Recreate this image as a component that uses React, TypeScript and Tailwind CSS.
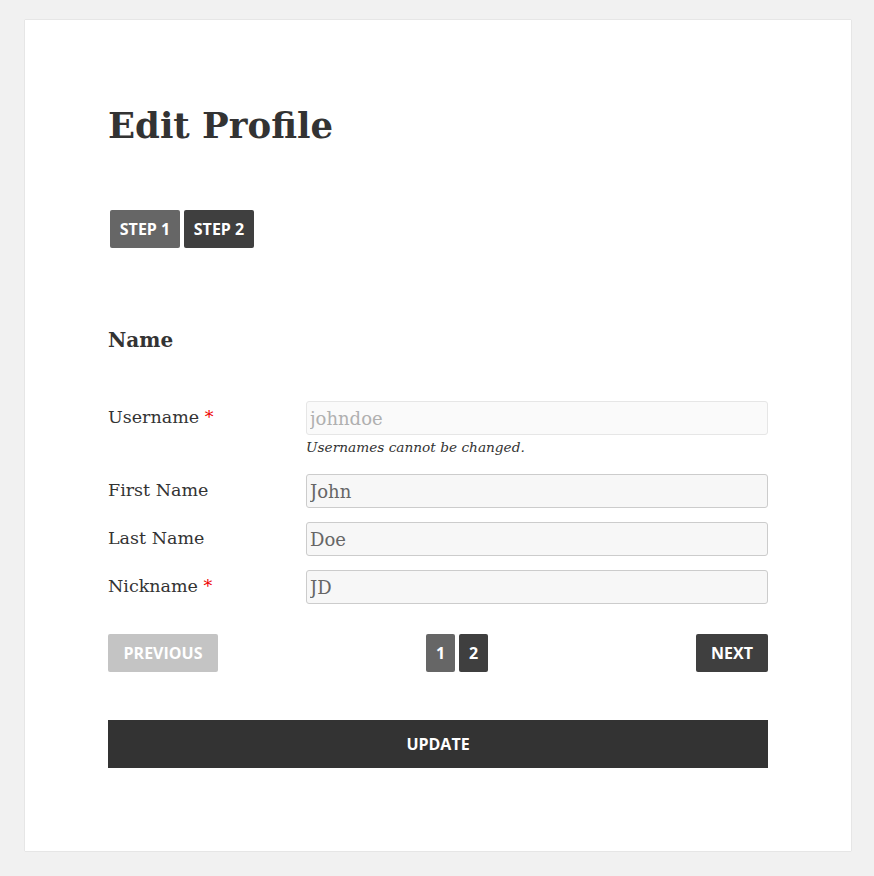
import React from 'react';

const serif = "font-['DejaVu_Serif','Liberation_Serif',serif]";
const sans = "font-['Open_Sans','Noto_Sans',sans-serif]";

const Row = ({
  label,
  required,
  value,
  disabled,
  help,
}: {
  label: string;
  required?: boolean;
  value: string;
  disabled?: boolean;
  help?: string;
}) => (
  <div className="flex items-start mb-[14px]">
    <label className={`${serif} w-[198px] text-[17.5px] leading-[30px] text-[#333] pt-[1px]`}>
      {label}
      {required && <span className="text-[#e00]"> *</span>}
    </label>
    <div className="flex-1">
      <input
        readOnly
        value={value}
        className={`${serif} w-full h-[34px] px-[3px] text-[18px] rounded-[3px] border outline-none ${
          disabled
            ? 'bg-[#fafafa] border-[#e6e6e6] text-[#b0b0b0]'
            : 'bg-[#f7f7f7] border-[#cccccc] text-[#666]'
        }`}
      />
      {help && (
        <p className={`${serif} italic text-[13.7px] leading-[24px] text-[#333] mb-[1px]`}>{help}</p>
      )}
    </div>
  </div>
);

export default function App() {
  return (
    <div className="min-h-[876px] bg-[#f1f1f1] pt-[20px] pb-[25px] px-[24px]">
      <div className="bg-white shadow-[0_0_1px_rgba(0,0,0,0.25)] ml-[1px] w-[826px] h-[831px] px-[83px] pt-[76px]">
        <h1 className={`${serif} font-bold text-[35.5px] leading-[60px] text-[#333]`}>Edit Profile</h1>

        <div className={`${sans} flex gap-[4px] mt-[54px] ml-[2px]`}>
          <button className="h-[38px] w-[70px] rounded-[2px] bg-[#666] text-white font-bold text-[16px]">
            STEP 1
          </button>
          <button className="h-[38px] w-[70px] rounded-[2px] bg-[#3f3f3f] text-white font-bold text-[16px]">
            STEP 2
          </button>
        </div>

        <h2 className={`${serif} font-bold text-[20px] leading-[30px] text-[#333] mt-[77px]`}>Name</h2>

        <div className="mt-[46px]">
          <Row label="Username" required value="johndoe" disabled help="Usernames cannot be changed." />
          <Row label="First Name" value="John" />
          <Row label="Last Name" value="Doe" />
          <Row label="Nickname" required value="JD" />
        </div>

        <div className={`${sans} flex items-center mt-[30px] font-bold text-white text-[16px]`}>
          <button className="h-[38px] w-[110px] rounded-[2px] bg-[#c4c4c4]">PREVIOUS</button>
          <div className="flex gap-[4px] ml-[208px]">
            <button className="h-[38px] w-[29px] rounded-[2px] bg-[#666]">1</button>
            <button className="h-[38px] w-[29px] rounded-[2px] bg-[#3f3f3f]">2</button>
          </div>
          <button className="ml-auto h-[38px] w-[72px] rounded-[2px] bg-[#3f3f3f]">NEXT</button>
        </div>

        <button className={`${sans} mt-[48px] w-full h-[48px] bg-[#333] text-white font-bold text-[16px]`}>
          UPDATE
        </button>
      </div>
    </div>
  );
}
